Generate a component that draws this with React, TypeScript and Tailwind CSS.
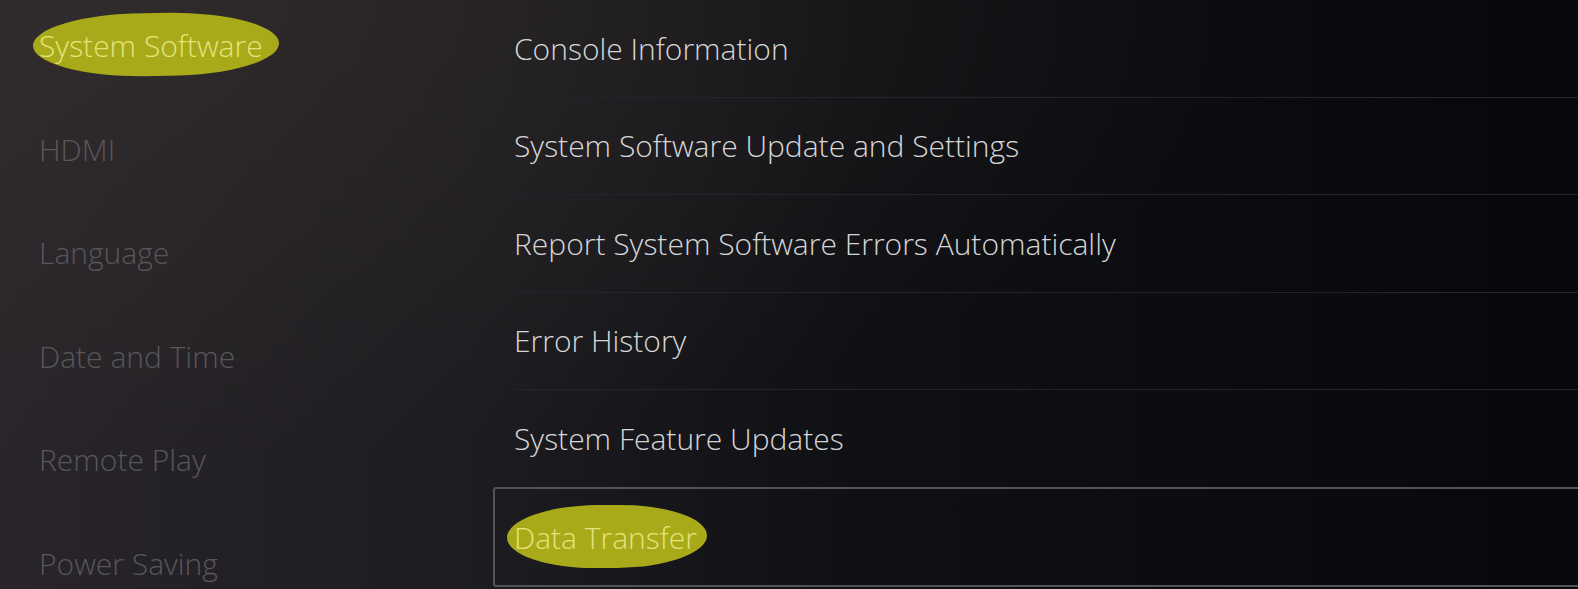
import React from "react";

const sideItems = [
  "System Software",
  "HDMI",
  "Language",
  "Date and Time",
  "Remote Play",
  "Power Saving",
];

const rows = [
  "Console Information",
  "System Software Update and Settings",
  "Report System Software Errors Automatically",
  "Error History",
  "System Feature Updates",
  "Data Transfer",
];

// marker-pen style highlight around a label
function Marked({ children, wide }: { children: React.ReactNode; wide?: boolean }) {
  return (
    <span className="relative inline-block">
      <span
        className={`absolute -top-[10px] -bottom-[8px] rounded-[45%/50%] bg-[#a8aa1a] -rotate-[0.6deg] ${
          wide ? "-left-[6px] -right-[16px]" : "-left-[7px] -right-[10px]"
        }`}
      />
      <span className="relative text-[#e4e47c]">{children}</span>
    </span>
  );
}

export default function App() {
  return (
    <div
      className="relative flex h-[589px] w-[1578px] overflow-hidden bg-[linear-gradient(90deg,#29252a_0%,#1d1c20_30%,#0f1014_55%,#07080b_100%)] text-[30px] font-light"
      style={{ fontFamily: '"Open Sans", "Noto Sans", sans-serif' }}
    >
      {/* soft glow top-left */}
      <div className="pointer-events-none absolute inset-0 bg-[radial-gradient(ellipse_at_10%_0%,rgba(60,52,48,0.45),transparent_55%)]" />

      {/* Sidebar */}
      <div className="relative -mt-[6px] w-[496px] shrink-0 pl-[39px]">
        {sideItems.map((item, i) => (
          <div key={item} className="flex h-[103.5px] items-center">
            {i === 0 ? (
              <Marked wide>{item}</Marked>
            ) : (
              <span className="text-[#58575a]">{item}</span>
            )}
          </div>
        ))}
      </div>

      {/* Settings list */}
      <div className="relative flex-1">
        {rows.map((row, i) =>
          i === rows.length - 1 ? (
            <div
              key={row}
              className="-ml-[3px] -mr-[8px] -mt-[1px] flex h-[100px] items-center rounded-[3px] border-2 border-[#525357] pl-[19px] pt-[2px]"
            >
              <Marked>{row}</Marked>
            </div>
          ) : (
            <div
              key={row}
              className={`ml-[18px] flex h-[97.5px] items-center ${
                i < rows.length - 2 ? "border-b border-[#24252a]" : ""
              }`}
            >
              <span className="text-[#d6d6d8]">{row}</span>
            </div>
          )
        )}
      </div>
    </div>
  );
}
